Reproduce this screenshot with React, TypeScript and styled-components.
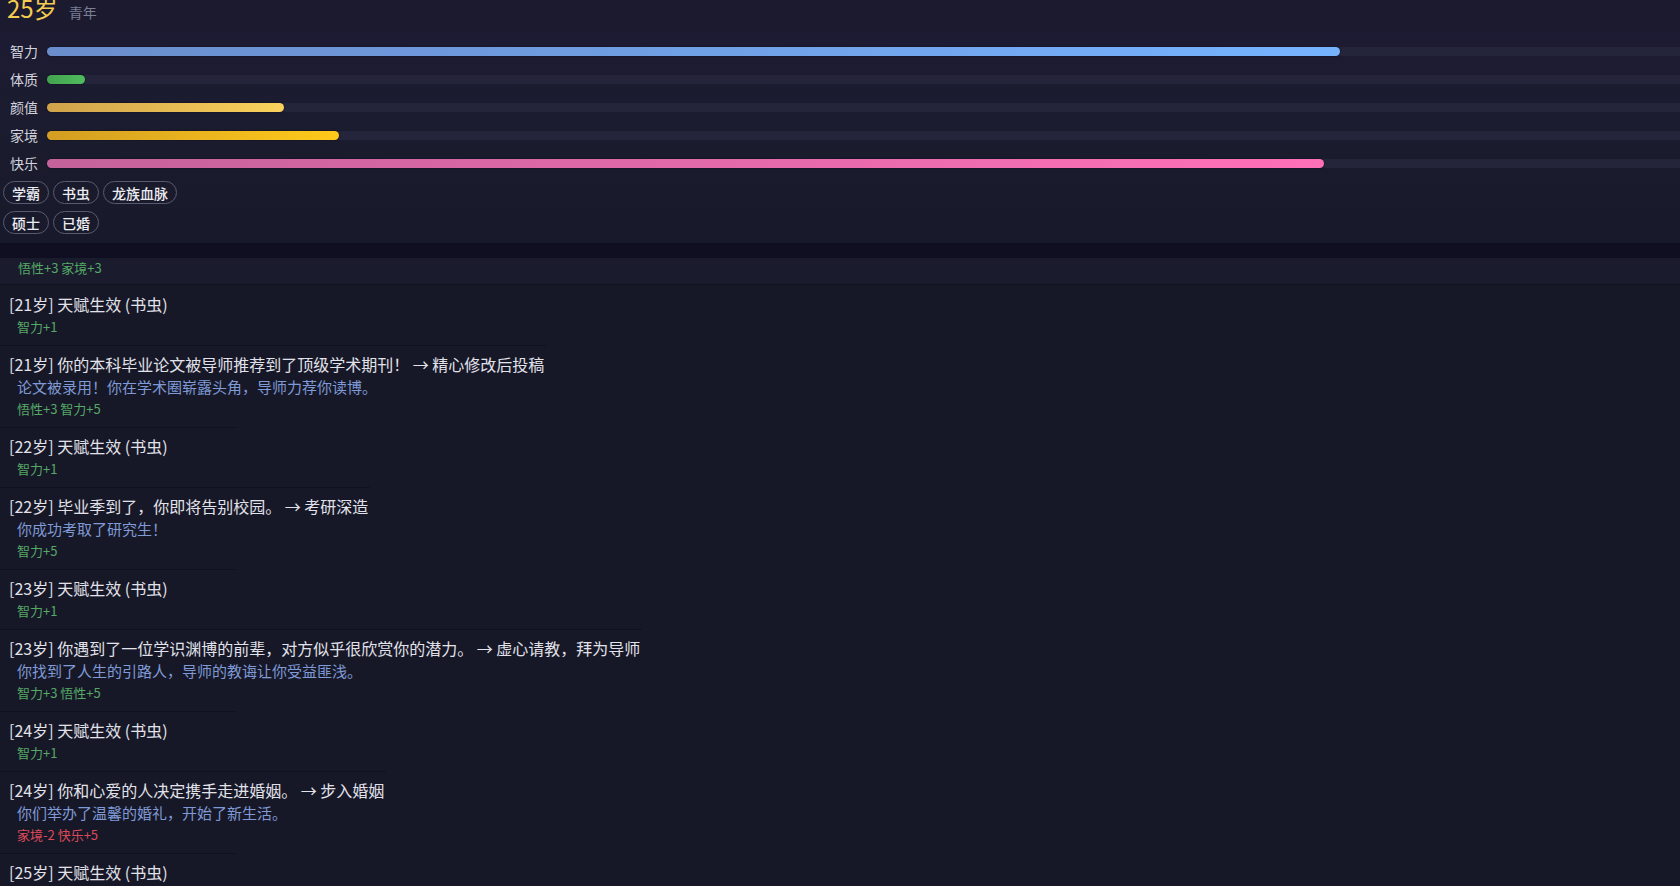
import React from "react";
import styled, { createGlobalStyle } from "styled-components";

const stats = [
  { name: "智力", value: 79.2, from: "#6a8dcc", to: "#76b3ff" },
  { name: "体质", value: 2.3, from: "#43a34f", to: "#50bb5e" },
  { name: "颜值", value: 14.5, from: "#d0a24a", to: "#fad25c" },
  { name: "家境", value: 17.9, from: "#d39e22", to: "#ffca1a" },
  { name: "快乐", value: 78.2, from: "#c4629b", to: "#ff70b8" },
];

const tagRows = [
  ["学霸", "书虫", "龙族血脉"],
  ["硕士", "已婚"],
];

type Tone = "good" | "bad";

const logs: { title: string; desc?: string; effect: string; tone?: Tone }[] = [
  { title: "[21岁] 天赋生效 (书虫)", effect: "智力+1" },
  {
    title: "[21岁] 你的本科毕业论文被导师推荐到了顶级学术期刊！ → 精心修改后投稿",
    desc: "论文被录用！你在学术圈崭露头角，导师力荐你读博。",
    effect: "悟性+3 智力+5",
  },
  { title: "[22岁] 天赋生效 (书虫)", effect: "智力+1" },
  {
    title: "[22岁] 毕业季到了，你即将告别校园。 → 考研深造",
    desc: "你成功考取了研究生！",
    effect: "智力+5",
  },
  { title: "[23岁] 天赋生效 (书虫)", effect: "智力+1" },
  {
    title: "[23岁] 你遇到了一位学识渊博的前辈，对方似乎很欣赏你的潜力。 → 虚心请教，拜为导师",
    desc: "你找到了人生的引路人，导师的教诲让你受益匪浅。",
    effect: "智力+3 悟性+5",
  },
  { title: "[24岁] 天赋生效 (书虫)", effect: "智力+1" },
  {
    title: "[24岁] 你和心爱的人决定携手走进婚姻。 → 步入婚姻",
    desc: "你们举办了温馨的婚礼，开始了新生活。",
    effect: "家境-2 快乐+5",
    tone: "bad",
  },
  { title: "[25岁] 天赋生效 (书虫)", effect: "智力+1" },
];

const App = () => {
  return (
    <>
      <GlobalStyle />
      <Screen>
        <Header>
          <Age>25岁</Age>
          <Stage>青年</Stage>
        </Header>
        <StatsPanel>
          {stats.map((s) => (
            <StatRow key={s.name}>
              <StatName>{s.name}</StatName>
              <Track>
                <Fill
                  $from={s.from}
                  $to={s.to}
                  style={{ width: `${s.value}%` }}
                />
              </Track>
            </StatRow>
          ))}
          <Tags>
            {tagRows.map((row, i) => (
              <TagRow key={i}>
                {row.map((t) => (
                  <Tag key={t}>{t}</Tag>
                ))}
              </TagRow>
            ))}
          </Tags>
        </StatsPanel>
        <Divider />
        <Log>
          <PartialEntry>
            <Effect $tone="good">悟性+3 家境+3</Effect>
          </PartialEntry>
          {logs.map((l, i) => (
            <Entry key={i}>
              <EntryTitle>{l.title}</EntryTitle>
              {l.desc && <EntryDesc>{l.desc}</EntryDesc>}
              <Effect $tone={l.tone || "good"}>{l.effect}</Effect>
            </Entry>
          ))}
        </Log>
      </Screen>
    </>
  );
};

const GlobalStyle = createGlobalStyle`
  html, body {
    margin: 0;
    padding: 0;
    background: #171827;
  }
  body {
    font-family: "Noto Sans CJK SC", "Noto Sans", sans-serif;
    color: #e6e6ee;
  }
`;

const Screen = styled.div`
  width: 100%;
  height: 886px;
  overflow: hidden;
  background: #171827;
`;

const Header = styled.header`
  height: 32px;
  display: flex;
  align-items: baseline;
  padding-left: 7px;
  overflow: hidden;
  background: #1b1a2f;
`;

const Age = styled.span`
  margin-top: -4px;
  font-size: 24px;
  line-height: 24px;
  color: #f4cc50;
`;

const Stage = styled.span`
  margin-left: 11px;
  font-size: 14px;
  color: #7b7e94;
`;

const StatsPanel = styled.section`
  padding: 5px 0 9px 0;
  background: linear-gradient(180deg, #1d1b33 0%, #1a1c2e 55%, #181a2b 100%);
`;

const StatRow = styled.div`
  height: 28px;
  display: flex;
  align-items: center;
  padding-left: 10px;
`;

const StatName = styled.span`
  width: 37px;
  flex-shrink: 0;
  font-size: 14px;
  color: #d2d3dc;
`;

const Track = styled.div`
  flex: 1;
  height: 9px;
  border-radius: 5px 0 0 5px;
  background: #24253a;
`;

const Fill = styled.div<{ $from: string; $to: string }>`
  height: 100%;
  border-radius: 5px;
  background: linear-gradient(90deg, ${(p) => p.$from}, ${(p) => p.$to});
  box-shadow: 0 0 2px rgba(0, 0, 0, 0.6);
`;

const Tags = styled.div`
  margin-top: 4px;
  padding-left: 3px;
  display: flex;
  flex-direction: column;
  gap: 7px;
`;

const TagRow = styled.div`
  display: flex;
  gap: 4px;
`;

const Tag = styled.span`
  height: 23px;
  box-sizing: border-box;
  padding: 0 8px;
  display: flex;
  align-items: center;
  border: 1px solid #585a70;
  border-radius: 12px;
  font-size: 14px;
  font-weight: 500;
  color: #ececf2;
`;

const Divider = styled.div`
  height: 15px;
  background: #0f0f21;
`;

const Log = styled.div`
  display: flex;
  flex-direction: column;
  align-items: flex-start;
`;

const PartialEntry = styled.div`
  align-self: stretch;
  padding: 0 0 6px 10px;
  background: #1a1c2d;
  border-bottom: 1px solid #11121f;
`;

const Entry = styled.div`
  min-width: 225px;
  padding: 7px 2px 8px 9px;
  display: flex;
  flex-direction: column;
  gap: 2px;
  border-top: 1px solid #10111d;

  ${PartialEntry} + & {
    border-top-color: transparent;
  }
`;

const EntryTitle = styled.div`
  font-size: 16px;
  line-height: 22px;
  color: #e2e2ea;
  white-space: nowrap;
`;

const EntryDesc = styled.div`
  padding-left: 8px;
  font-size: 15px;
  line-height: 20px;
  color: #7f9ad6;
  white-space: nowrap;
`;

const Effect = styled.div<{ $tone: Tone }>`
  padding-left: 8px;
  font-size: 13px;
  line-height: 20px;
  color: ${(p) => (p.$tone === "bad" ? "#dc4a5a" : "#55a866")};
  white-space: nowrap;
`;

export default App;
